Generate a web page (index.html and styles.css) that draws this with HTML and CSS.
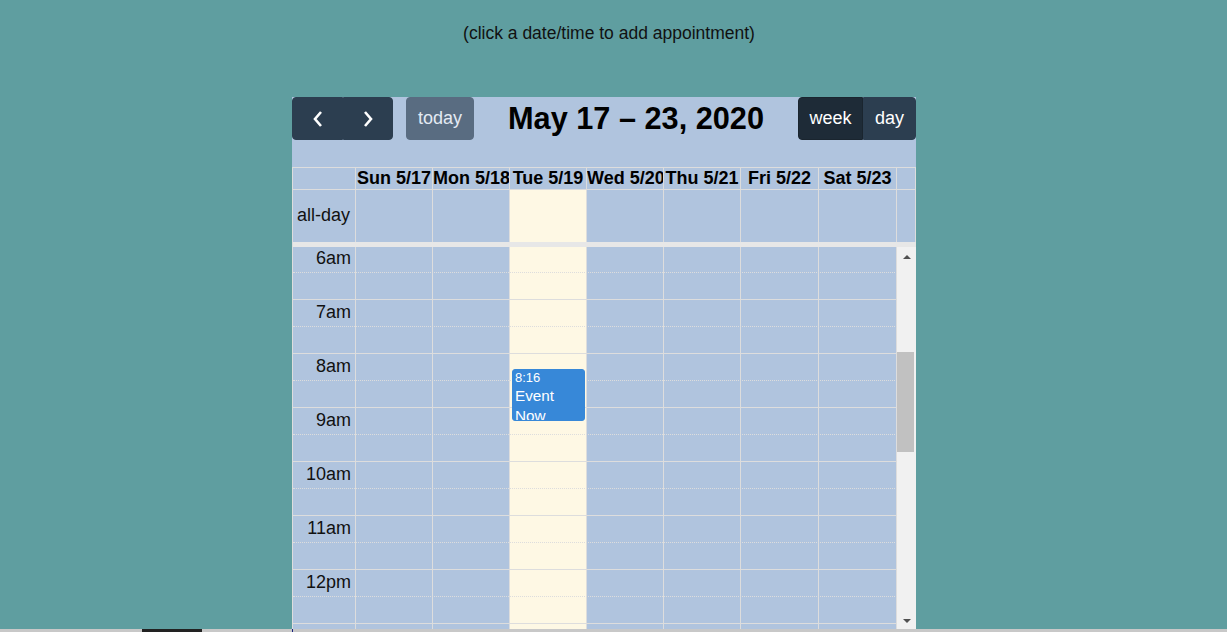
FILE: index.html
```html
<!DOCTYPE html>
<html lang="en">
<head>
<meta charset="utf-8">
<title>Calendar</title>
<link rel="stylesheet" href="styles.css">
</head>
<body>
<div class="hint">(click a date/time to add appointment)</div>
<div class="cal">
  <div class="toolbar">
    <div class="chunk">
      <div class="btn-group">
        <button class="btn btn-prev" aria-label="prev"><svg width="12" height="18" viewBox="0 0 12 18"><polyline points="9,2 3,9 9,16" fill="none" stroke="#fff" stroke-width="2.6"/></svg></button>
        <button class="btn btn-next" aria-label="next"><svg width="12" height="18" viewBox="0 0 12 18"><polyline points="3,2 9,9 3,16" fill="none" stroke="#fff" stroke-width="2.6"/></svg></button>
      </div>
      <button class="btn btn-today">today</button>
    </div>
    <h2 class="title">May 17 – 23, 2020</h2>
    <div class="btn-group">
      <button class="btn btn-week active">week</button>
      <button class="btn btn-day">day</button>
    </div>
  </div>
  <div class="table">
    <div class="head">
      <div class="hcell"></div>
      <div class="hcell">Sun 5/17</div>
      <div class="hcell">Mon 5/18</div>
      <div class="hcell">Tue 5/19</div>
      <div class="hcell">Wed 5/20</div>
      <div class="hcell">Thu 5/21</div>
      <div class="hcell">Fri 5/22</div>
      <div class="hcell">Sat 5/23</div>
      <div class="hcell"></div>
    </div>
    <div class="allday">
      <div class="acell axis">all-day</div>
      <div class="acell"></div>
      <div class="acell"></div>
      <div class="acell today"></div>
      <div class="acell"></div>
      <div class="acell"></div>
      <div class="acell"></div>
      <div class="acell"></div>
      <div class="acell"></div>
    </div>
    <div class="divider"></div>
    <div class="body">
      <div class="grid">
        <div class="col c1"></div>
        <div class="col c2"></div>
        <div class="col c3"></div>
        <div class="col c4 today"></div>
        <div class="col c5"></div>
        <div class="col c6"></div>
        <div class="col c7"></div>
        <div class="col c8"></div>
        <div class="slots">
          <div class="slot major first"><span class="lbl">6am</span></div>
          <div class="slot"></div>
          <div class="slot major"><span class="lbl">7am</span></div>
          <div class="slot"></div>
          <div class="slot major"><span class="lbl">8am</span></div>
          <div class="slot"></div>
          <div class="slot major"><span class="lbl">9am</span></div>
          <div class="slot"></div>
          <div class="slot major"><span class="lbl">10am</span></div>
          <div class="slot"></div>
          <div class="slot major"><span class="lbl">11am</span></div>
          <div class="slot"></div>
          <div class="slot major"><span class="lbl">12pm</span></div>
          <div class="slot"></div>
          <div class="slot major"></div>
          <div class="slot"></div>
        </div>
        <div class="event">
          <div class="ev-time">8:16</div>
          <div class="ev-title">Event Now</div>
        </div>
      </div>
      <div class="sb">
        <div class="sb-btn"><span class="tri-up"></span></div>
        <div class="sb-track"><div class="sb-thumb"></div></div>
        <div class="sb-btn"><span class="tri-down"></span></div>
      </div>
    </div>
  </div>
</div>
<div class="strip"><span class="strip-dark"></span><span class="strip-mark"></span></div>
</body>
</html>
```

FILE: styles.css
```css
* { box-sizing: border-box; }
html, body { margin: 0; padding: 0; height: 632px; overflow: hidden; }
body {
  background: #5f9ea0;
  font-family: "Liberation Sans", Arial, Helvetica, sans-serif;
  color: #000;
  display: flex;
  flex-direction: column;
}
.hint {
  font-size: 17.5px;
  line-height: 21px;
  height: 43px;
  padding-top: 23px;
  padding-right: 9px;
  text-align: center;
  color: #111;
  flex: none;
}
.cal {
  margin: 54px 0 0 292px;
  width: 624px;
  height: 532px;
  background: #b0c4de;
  font-size: 18px;
  flex: none;
}
.toolbar {
  display: flex;
  justify-content: space-between;
  align-items: center;
  height: 43px;
  margin-bottom: 27px;
}
.chunk { display: flex; align-items: center; }
.btn-group { display: flex; }
.btn {
  font-family: "Liberation Sans", Arial, Helvetica, sans-serif;
  font-size: 18px;
  color: #fff;
  background: #2c3e50;
  border: 1px solid #2c3e50;
  height: 43px;
  padding: 0;
  margin: 0;
  border-radius: 4px;
  display: flex;
  align-items: center;
  justify-content: center;
}
.btn-group .btn:first-child { border-top-right-radius: 0; border-bottom-right-radius: 0; }
.btn-group .btn:last-child { border-top-left-radius: 0; border-bottom-left-radius: 0; }
.btn-prev { width: 51px; }
.btn-next { width: 50px; }
.btn-today { width: 68px; margin-left: 13px; opacity: 0.65; }
.btn-week { width: 65px; }
.btn-day { width: 53px; }
.btn.active { background: #1e2b37; border-color: #1a252f; }
.title {
  margin: 0;
  font-size: 30.7px;
  font-weight: bold;
  line-height: 36px;
}
.table { border-left: 1px solid #ddd; }
.head {
  display: grid;
  grid-template-columns: 63px repeat(5, 77px) 78px 78px 19px;
  border-top: 1px solid #ddd;
}
.hcell {
  height: 22px;
  border-right: 1px solid #ddd;
  border-bottom: 1px solid #ddd;
  font-weight: bold;
  line-height: 21px;
  text-align: center;
  white-space: nowrap;
  overflow: hidden;
}
.allday {
  display: grid;
  grid-template-columns: 63px repeat(5, 77px) 78px 78px 19px;
}
.acell {
  height: 52px;
  border-right: 1px solid #ddd;
}
.acell.axis {
  display: flex;
  align-items: center;
  justify-content: flex-end;
  padding-right: 5px;
  padding-bottom: 1px;
  color: #111;
}
.today { background: #fef8e4; }
.divider {
  height: 5px;
  background: #e7e7e7;
}
.body {
  display: flex;
  height: 382px;
  overflow: hidden;
}
.grid {
  flex: 1;
  display: grid;
  grid-template-columns: 63px repeat(5, 77px) 78px 78px;
  grid-template-rows: auto;
}
.col { grid-row: 1; border-right: 1px solid #ddd; }
.c1 { grid-column: 1; }
.c2 { grid-column: 2; }
.c3 { grid-column: 3; }
.c4 { grid-column: 4; }
.c5 { grid-column: 5; }
.c6 { grid-column: 6; }
.c7 { grid-column: 7; }
.c8 { grid-column: 8; }
.slots { grid-row: 1; grid-column: 1 / -1; }
.slot {
  height: 27px;
  border-bottom: 1px solid #ddd;
  display: flex;
  align-items: center;
}
.slot.major { border-bottom-style: dotted; }
.slot.first { height: 26px; }
.lbl {
  width: 63px;
  text-align: right;
  padding-right: 5px;
  padding-bottom: 2px;
  color: #111;
}
.event {
  grid-row: 1;
  grid-column: 4;
  align-self: start;
  margin: 122px 2px 0 2px;
  height: 52px;
  background: #3788d8;
  border: 1px solid #3788d8;
  border-radius: 3px;
  color: #fff;
  padding: 0 2px;
  overflow: hidden;
}
.ev-time { font-size: 13px; line-height: 15px; margin-bottom: 1px; }
.ev-title { font-size: 15.3px; line-height: 20px; }
.sb {
  width: 19px;
  flex: none;
  background: #f1f1f1;
  display: flex;
  flex-direction: column;
}
.sb-btn {
  height: 17px;
  flex: none;
  display: flex;
  align-items: center;
  justify-content: center;
}
.sb-btn:first-child { padding-top: 3px; }
.tri-up {
  width: 0; height: 0;
  border-left: 4px solid transparent;
  border-right: 4px solid transparent;
  border-bottom: 4px solid #505050;
}
.tri-down {
  width: 0; height: 0;
  border-left: 4px solid transparent;
  border-right: 4px solid transparent;
  border-top: 4px solid #505050;
}
.sb-track { flex: 1; }
.sb-thumb {
  margin-top: 88px;
  width: 17px;
  height: 100px;
  background: #c1c1c1;
}
.strip {
  height: 3px;
  flex: none;
  background: #c8c8c8;
  display: flex;
}
.strip-dark { margin-left: 142px; width: 60px; background: #222; }
.strip-mark { margin-left: 90px; width: 1px; background: #1a237e; }
```
